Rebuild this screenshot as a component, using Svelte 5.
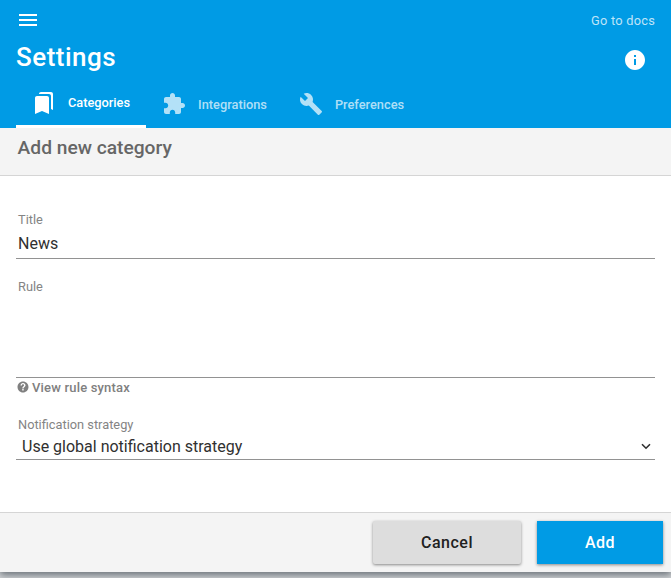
<script>
  let title = $state('News');
  let rule = $state('');
  const tabs = [
    { label: 'Categories', width: 130, icon: 'M19 18l2 1V3c0-1.100-.900-2-2-2H8.990C7.890 1 7 1.900 7 3h10c1.100 0 2 .900 2 2v13zM15 5H5c-1.100 0-2 .900-2 2v16l7-3 7 3V7c0-1.100-.900-2-2-2z', active: true },
    { label: 'Integrations', width: 137, icon: 'M20.500 11H19V7c0-1.100-.900-2-2-2h-4V3.500C13 2.120 11.880 1 10.500 1S8 2.120 8 3.500V5H4c-1.100 0-1.990.900-1.990 2v3.800H3.500c1.490 0 2.700 1.210 2.700 2.700s-1.210 2.700-2.700 2.700H2V20c0 1.100.900 2 2 2h3.800v-1.500c0-1.490 1.210-2.700 2.700-2.700 1.490 0 2.700 1.210 2.700 2.700V22H17c1.100 0 2-.900 2-2v-4h1.500c1.380 0 2.500-1.120 2.500-2.500S21.880 11 20.500 11z' },
    { label: 'Preferences', width: 137, icon: 'M22.700 19l-9.100-9.100c.900-2.300.400-5-1.500-6.900-2-2-5-2.400-7.400-1.300L9 6 6 9 1.600 4.700C.400 7.100.900 10.100 2.900 12.100c1.900 1.900 4.600 2.400 6.900 1.500l9.100 9.100c.400.400 1 .400 1.400 0l2.300-2.300c.500-.400.500-1.100.100-1.400z' }
  ];
</script>

<div class="page">
  <main>
    <header>
      <div class="bar">
        <svg class="menu" viewBox="0 0 24 24"><path d="M3 18h18v-2H3v2zm0-5h18v-2H3v2zm0-7v2h18V6H3z" /></svg>
        <span class="docs">Go to docs</span>
      </div>
      <div class="heading">
        <h1>Settings</h1>
        <svg class="info" viewBox="0 0 24 24"><path d="M12 2C6.480 2 2 6.480 2 12s4.480 10 10 10 10-4.480 10-10S17.520 2 12 2zm1 15h-2v-6h2v6zm0-8h-2V7h2v2z" /></svg>
      </div>
      <nav>
        {#each tabs as tab}
          <div class="tab" class:active={tab.active} style:width="{tab.width}px">
            <svg viewBox="0 0 24 24"><path d={tab.icon} /></svg>
            <span>{tab.label}</span>
          </div>
        {/each}
      </nav>
    </header>

    <h2>Add new category</h2>

    <form>
      <label for="title">Title</label>
      <input id="title" bind:value={title} />
      <label class="rule-label" for="rule">Rule</label>
      <textarea id="rule" bind:value={rule}></textarea>
      <div class="syntax">
        <svg viewBox="0 0 24 24"><path d="M12 1C5.900 1 1 5.900 1 12s4.900 11 11 11 11-4.900 11-11S18.100 1 12 1zm1.300 18h-2.800v-2.800h2.800V19zm2.700-8.200c-1.400 1.500-2.700 1.900-2.700 4h-2.700c0-3.500 3.600-4 3.600-6.100 0-1.200-.900-2.100-2.200-2.100s-2.200.900-2.200 2.200H7c0-2.700 2.200-4.900 5-4.900s5 2 5 4.600c0 .900-.400 1.700-1 2.300z" /></svg>
        <span>View rule syntax</span>
      </div>
      <label class="strategy-label" for="strategy">Notification strategy</label>
      <div class="select" id="strategy">
        <span>Use global notification strategy</span>
        <svg viewBox="0 0 10 7"><path d="M1 1.200L5 5.200L9 1.200" /></svg>
      </div>
    </form>

    <footer>
      <button class="cancel">Cancel</button>
      <button class="add">Add</button>
    </footer>
  </main>
</div>

<style>
  .page {
    height: 578px;
    overflow: hidden;
    background: #d0d3d5;
    font-family: Roboto, sans-serif;
  }
  main {
    box-sizing: border-box;
    height: 572px;
    display: flex;
    flex-direction: column;
    background: #fff;
    box-shadow: 0 3px 7px rgba(40, 50, 60, 0.6);
  }
  header {
    height: 128px;
    flex: none;
    background: #009be5;
    color: #fff;
  }
  svg { display: block; fill: currentColor; }
  .bar {
    height: 40px;
    display: flex;
    align-items: center;
    justify-content: space-between;
    padding: 0 16px;
  }
  .menu { width: 24px; height: 24px; }
  .docs { font-size: 12.800px; letter-spacing: 0.250px; color: rgba(255, 255, 255, 0.75); padding-top: 1px; }
  .heading {
    height: 40px;
    display: flex;
    align-items: center;
    justify-content: space-between;
    padding: 0 24px 0 16px;
  }
  h1 { margin: 0; font-size: 26px; font-weight: 500; letter-spacing: 0.5px; line-height: 36px; padding-bottom: 7px; }
  .info { width: 24px; height: 24px; }
  nav { display: flex; height: 48px; padding-left: 16px; }
  .tab {
    box-sizing: border-box;
    display: flex;
    align-items: center;
    justify-content: center;
    gap: 12px;
    color: rgba(255, 255, 255, 0.7);
    font-size: 12.800px;
    font-weight: 500;
    white-space: nowrap;
  }
  .tab.active { gap: 11.500px; padding-left: 0.500px; color: #fff; border-bottom: 3px solid #fff; }
  .tab svg { width: 24px; height: 24px; flex: none; }
  h2 {
    box-sizing: border-box;
    height: 48px;
    flex: none;
    margin: 0;
    padding: 7px 17.600px;
    border-bottom: 1px solid #d5d5d5;
    background: #f4f4f4;
    color: #666;
    font-size: 19.200px;
    line-height: 25px;
    font-weight: 500;
  }
  form {
    flex: 1;
    display: flex;
    flex-direction: column;
    padding: 36px 16px 0;
  }
  label { height: 16px; line-height: 16px; padding-left: 2px; font-size: 12.800px; color: #848484; }
  input, textarea, .select {
    box-sizing: border-box;
    width: 100%;
    margin: 0;
    border: 0;
    border-bottom: 1px solid #929292;
    border-radius: 0;
    outline: 0;
    background: transparent;
    font: 16px Roboto, sans-serif;
    color: #303030;
  }
  input { height: 31px; padding: 0 2px; }
  .rule-label { margin-top: 20px; }
  textarea { height: 83px; resize: none; }
  .syntax { display: flex; height: 20px; color: #808080; font-size: 13px; letter-spacing: 0.180px; font-weight: 500; line-height: 20px; gap: 3.500px; }
  .syntax svg { width: 12px; height: 12px; margin: 2.500px 0 0 0.500px; }
  .strategy-label { margin-top: 19px; }
  .select { height: 27px; display: flex; align-items: center; justify-content: space-between; padding: 0 4px 0 6px; }
  .select svg { width: 10px; height: 7px; fill: none; stroke: #303030; stroke-width: 1.600; }
  footer {
    box-sizing: border-box;
    height: 60px;
    display: flex;
    justify-content: flex-end;
    gap: 16px;
    padding: 8px;
    border-top: 1px solid #d5d5d5;
    background: #f4f4f4;
  }
  button {
    height: 43px;
    padding: 0;
    border: 0;
    border-radius: 2px;
    font: 500 16px/43px Roboto, sans-serif;
    letter-spacing: 0.500px;
    box-shadow: 0 1px 3px rgba(0, 0, 0, 0.45);
  }
  .cancel { width: 148px; background: #ddd; color: #212121; }
  .add { width: 126px; border-radius: 0; background: #009be5; color: #fff; }
</style>
